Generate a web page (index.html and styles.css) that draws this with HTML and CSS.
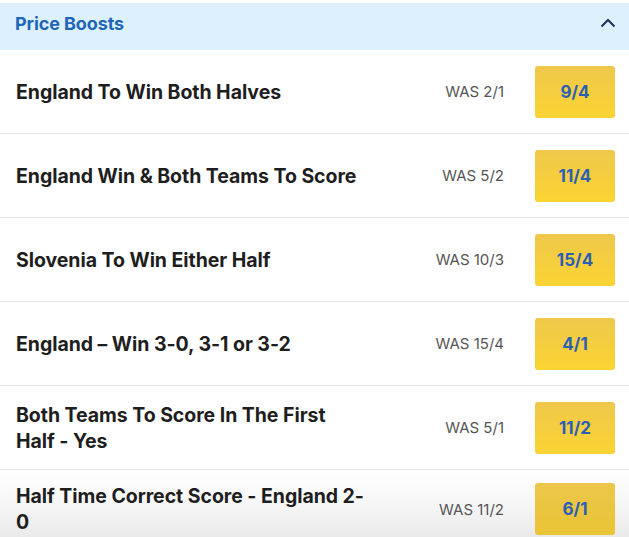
FILE: index.html
```html
<!DOCTYPE html>
<html>
<head>
<meta charset="utf-8">
<link rel="stylesheet" href="styles.css">
</head>
<body>
<div class="panel">
  <div class="header">
    <span class="header-title">Price Boosts</span>
    <svg class="chevron" width="16" height="10" viewBox="0 0 16 10"><path d="M1.5 8.5 L8 2 L14.5 8.5" fill="none" stroke="#1d3557" stroke-width="2"/></svg>
  </div>
  <div class="row">
    <div class="title">England To Win Both Halves</div>
    <div class="was">WAS 2/1</div>
    <div class="odds">9/4</div>
  </div>
  <div class="row">
    <div class="title">England Win &amp; Both Teams To Score</div>
    <div class="was">WAS 5/2</div>
    <div class="odds">11/4</div>
  </div>
  <div class="row">
    <div class="title">Slovenia To Win Either Half</div>
    <div class="was">WAS 10/3</div>
    <div class="odds">15/4</div>
  </div>
  <div class="row">
    <div class="title">England – Win 3-0, 3-1 or 3-2</div>
    <div class="was">WAS 15/4</div>
    <div class="odds">4/1</div>
  </div>
  <div class="row">
    <div class="title">Both Teams To Score In The First Half - Yes</div>
    <div class="was">WAS 5/1</div>
    <div class="odds">11/2</div>
  </div>
  <div class="row last">
    <div class="title">Half Time Correct Score - England 2-0</div>
    <div class="was">WAS 11/2</div>
    <div class="odds">6/1</div>
  </div>
</div>
</body>
</html>
```

FILE: styles.css
```css
html, body {
  margin: 0;
  padding: 0;
  background: #ffffff;
}
body {
  font-family: Inter, "Liberation Sans", sans-serif;
  overflow: hidden;
  height: 537px;
}
.panel {
  padding-top: 3px;
}
.header {
  height: 47px;
  box-sizing: border-box;
  background: #ddf0fd;
  display: flex;
  align-items: center;
  justify-content: space-between;
  padding: 0 13px 7px 15px;
}
.header-title {
  color: #1f66b8;
  font-weight: 700;
  font-size: 18px;
  letter-spacing: -0.1px;
}
.chevron {
  display: block;
}
.row {
  height: 83px;
  border-bottom: 1px solid #e6e6e6;
  display: flex;
  align-items: center;
  padding: 0 14px 0 16px;
}
.title {
  width: 348px;
  font-weight: 700;
  font-size: 19.5px;
  line-height: 26px;
  color: #1e1e1e;
  letter-spacing: -0.05px;
}
.was {
  flex: 1;
  text-align: right;
  color: #555555;
  font-size: 15px;
  padding-right: 31px;
}
.odds {
  width: 80px;
  height: 52px;
  border-radius: 3px;
  background: linear-gradient(#efc84c, #fbd433);
  color: #2b5fb4;
  font-weight: 700;
  font-size: 17px;
  display: flex;
  align-items: center;
  justify-content: center;
}
.last {
  background: linear-gradient(#ffffff 0%, #f6f6f6 40%, #e2e2e2 100%);
  border-bottom: none;
  padding-bottom: 9px;
  height: 78px;
}
.last .odds {
  background: linear-gradient(#ecc64a, #e9c435);
}
```
